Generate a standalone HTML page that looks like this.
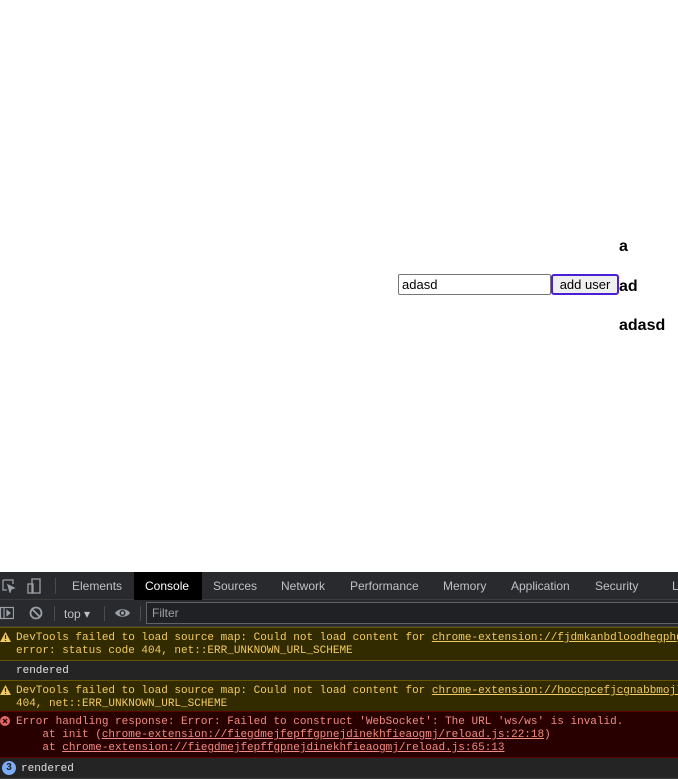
<!DOCTYPE html>
<html><head><style>
*{margin:0;padding:0;box-sizing:border-box}
body{width:678px;height:779px;overflow:hidden;background:#fff;font-family:"Liberation Sans",sans-serif;position:relative}
.abs{position:absolute}
.b{font-weight:bold;font-size:16px;color:#000}
#dt{position:absolute;left:0;top:572px;width:678px;height:207px;background:#242424;overflow:hidden}
.tb{position:absolute;left:0;width:678px;background:#292a2d;border-bottom:1px solid #3c3c3c}
.tab{position:absolute;top:0;height:27px;line-height:28px;font-size:12px;color:#bdc1c6;white-space:nowrap}
.row{position:absolute;left:0;width:678px;font-family:"Liberation Mono",monospace;font-size:11px;line-height:13px;white-space:pre;overflow:hidden}
.w{background:#332b00;color:#f2ca60;border-top:1px solid #650;border-bottom:1px solid #650}
.e{background:#290000;color:#f28b82;border-top:1px solid #5c0000;border-bottom:1px solid #5c0000}
.n{color:#e0e0e0;border-bottom:1px solid #3a3a3a}
u{text-decoration:underline}
</style></head><body>
<div class="abs b" style="left:619px;top:238px">a</div>
<div class="abs" style="left:398px;top:274px;width:153px;height:21px;border:1px solid #767676;border-radius:2px;font-size:13px;line-height:19px;padding-left:3px">adasd</div>
<div class="abs" style="left:551px;top:274px;width:68px;height:21px;border:2px solid #4c1fd6;border-radius:3px;background:#efefef;font-size:13px;line-height:17px;text-align:center">add user</div>
<div class="abs b" style="left:619px;top:278px">ad</div>
<div class="abs b" style="left:619px;top:317px">adasd</div>

<div id="dt">
<div class="tb" style="top:0;height:28px">
<svg class="abs" style="left:2px;top:7px" width="14" height="14" viewBox="0 0 14 14" fill="none" stroke="#9aa0a6" stroke-width="1.3"><path d="M1 1h10v4M1 1v10h4"/><path d="M6 6l6 3-3 1-1 3z" fill="#9aa0a6"/></svg>
<svg class="abs" style="left:27px;top:6px" width="14" height="16" viewBox="0 0 14 16" fill="none" stroke="#9aa0a6" stroke-width="1.3"><rect x="5" y="1" width="8" height="14"/><rect x="1" y="6" width="5" height="9"/></svg>
<div class="abs" style="left:55px;top:6px;width:1px;height:16px;background:#494c50"></div>
<div class="tab" style="left:72px">Elements</div>
<div class="abs" style="left:134px;top:0;width:68px;height:28px;background:#000"></div>
<div class="tab" style="left:145px;color:#fff">Console</div>
<div class="tab" style="left:213px">Sources</div>
<div class="tab" style="left:281px">Network</div>
<div class="tab" style="left:350px">Performance</div>
<div class="tab" style="left:443px">Memory</div>
<div class="tab" style="left:511px">Application</div>
<div class="tab" style="left:595px">Security</div>
<div class="tab" style="left:672px">L</div>
</div>
<div class="tb" style="top:28px;height:27px">
<svg class="abs" style="left:0;top:6px" width="14" height="14" viewBox="0 0 14 14" fill="none" stroke="#9aa0a6" stroke-width="1.2"><rect x="0.5" y="1.5" width="13" height="11"/><path d="M4 2v10"/><path d="M7 4.5l3 2.5-3 2.5z" fill="#9aa0a6"/></svg>
<svg class="abs" style="left:29px;top:6px" width="14" height="14" viewBox="0 0 14 14" fill="none" stroke="#9aa0a6" stroke-width="1.8"><circle cx="7" cy="7" r="5.5"/><path d="M3 3l8 8"/></svg>
<div class="abs" style="left:54px;top:6px;width:1px;height:15px;background:#494c50"></div>
<div class="tab" style="left:64px;top:0;color:#bdc1c6">top ▾</div>
<div class="abs" style="left:104px;top:6px;width:1px;height:15px;background:#494c50"></div>
<svg class="abs" style="left:114px;top:6px" width="17" height="14" viewBox="0 0 17 14"><path d="M1 7C4 2 13 2 16 7 13 12 4 12 1 7z" fill="#9aa0a6"/><circle cx="8.5" cy="7" r="3" fill="#292a2d"/><circle cx="8.5" cy="7" r="1.6" fill="#9aa0a6"/></svg>
<div class="abs" style="left:140px;top:6px;width:1px;height:15px;background:#494c50"></div>
<div class="abs" style="left:146px;top:2px;width:540px;height:22px;border:1px solid #5f6368;background:#202124;font-size:12px;color:#9aa0a6;line-height:21px;padding-left:5px">Filter</div>
</div>
<div class="row w" style="top:55px;height:34px;padding:4px 0 0 16px">DevTools failed to load source map: Could not load content for <u>chrome-extension://fjdmkanbdloodhegphgklihkfmfmm</u>
error: status code 404, net::ERR_UNKNOWN_URL_SCHEME</div>
<svg class="abs" style="left:0;top:60px" width="11" height="10" viewBox="0 0 11 10"><path d="M5.5 0L11 10H0z" fill="#f2ca60"/><path d="M5.5 3v4M5.5 8v1" stroke="#332b00" stroke-width="1.2"/></svg>
<div class="row n" style="top:89px;height:20px;padding:4px 0 0 16px">rendered</div>
<div class="row w" style="top:108px;height:32px;padding:4px 0 0 16px">DevTools failed to load source map: Could not load content for <u>chrome-extension://hoccpcefjcgnabbmojldbcfmnpha</u>
404, net::ERR_UNKNOWN_URL_SCHEME</div>
<svg class="abs" style="left:0;top:113px" width="11" height="10" viewBox="0 0 11 10"><path d="M5.5 0L11 10H0z" fill="#f2ca60"/><path d="M5.5 3v4M5.5 8v1" stroke="#332b00" stroke-width="1.2"/></svg>
<div class="row e" style="top:139px;height:47px;padding:4px 0 0 16px">Error handling response: Error: Failed to construct 'WebSocket': The URL 'ws/ws' is invalid.
    at init (<u>chrome-extension://fiegdmejfepffgpnejdinekhfieaogmj/reload.js:22:18</u>)
    at <u>chrome-extension://fiegdmejfepffgpnejdinekhfieaogmj/reload.js:65:13</u></div>
<svg class="abs" style="left:0;top:144px" width="10" height="10" viewBox="0 0 10 10"><circle cx="5" cy="5" r="5" fill="#e46962"/><path d="M3 3l4 4M7 3l-4 4" stroke="#290000" stroke-width="1.4"/></svg>
<div class="row n" style="top:186px;height:21px;padding:5px 0 0 21px">rendered</div>
<div class="abs" style="left:2px;top:189px;width:14px;height:14px;border-radius:7px;background:#7cacf8;color:#202124;font:bold 10px/14px 'Liberation Sans',sans-serif;text-align:center">3</div>
</div>
</body></html>
